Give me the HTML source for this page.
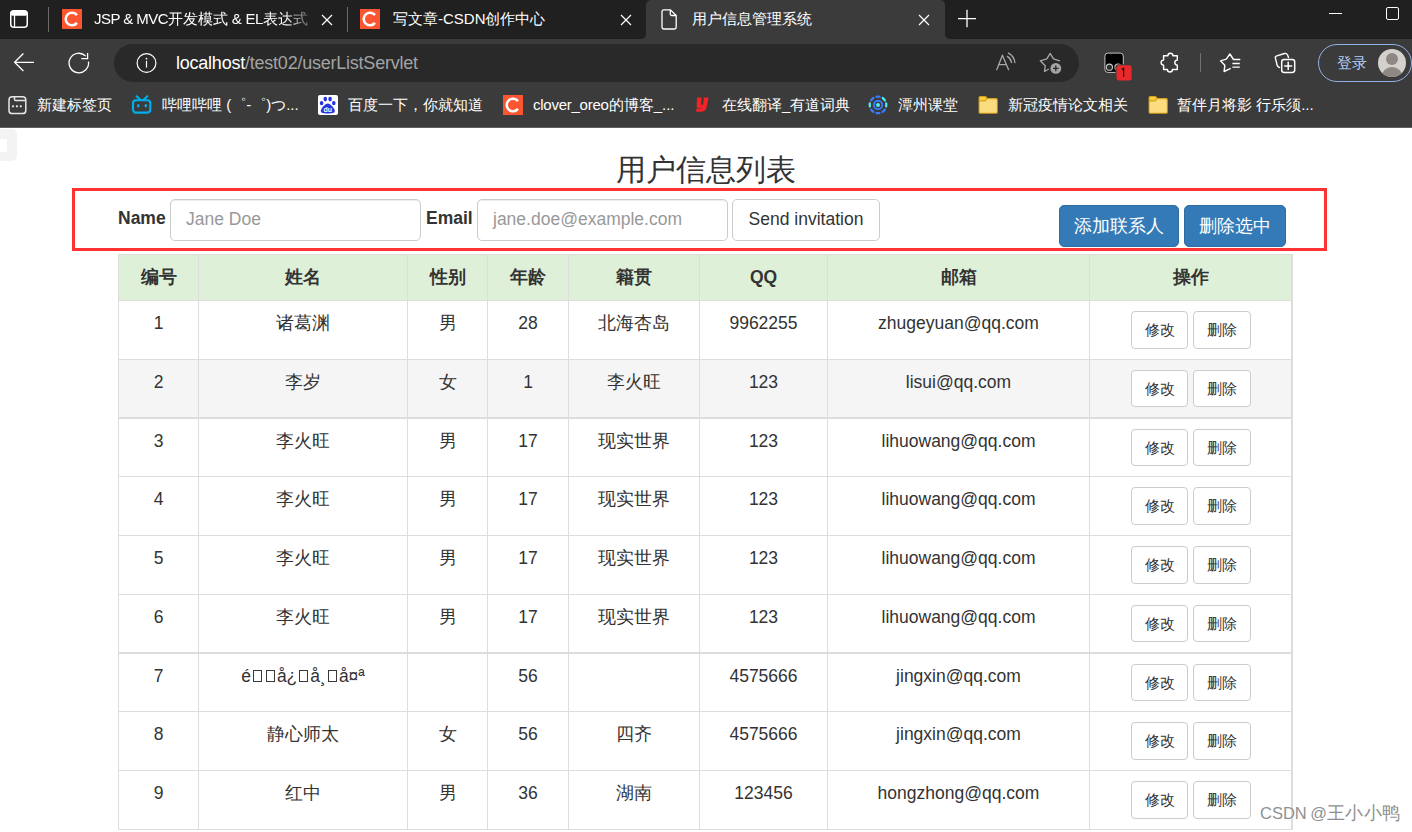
<!DOCTYPE html><html><head><meta charset="utf-8"><style>
*{margin:0;padding:0;box-sizing:border-box}
html,body{width:1412px;height:832px;overflow:hidden;background:#fff;font-family:"Liberation Sans",sans-serif}
.a{position:absolute}
svg{position:absolute;overflow:visible}
.tt{position:absolute;top:9px;font-size:15px;line-height:20px;color:#fff;white-space:nowrap}
.bm{position:absolute;top:95px;font-size:15px;line-height:20px;color:#fff;white-space:nowrap}
.lbl{position:absolute;font-size:17.5px;font-weight:bold;color:#333;line-height:22px;white-space:nowrap}
.inp{position:absolute;top:199px;height:42px;border:1px solid #ccc;border-radius:5px;background:#fff;box-shadow:inset 0 1px 1px rgba(0,0,0,.075);font-size:17.5px;color:#999;line-height:39px;padding-left:15px;white-space:nowrap}
.bp{position:absolute;top:205px;height:42px;background:#337ab7;border:1px solid #2e6da4;border-radius:5px;color:#fff;font-size:17.5px;line-height:40px;text-align:center;white-space:nowrap}
.hl{position:absolute;left:118px;width:1175px;height:1px;background:#ddd}
.vl{position:absolute;top:254px;width:1px;height:576px;background:#ddd}
.c{position:absolute;text-align:center;font-size:17.5px;line-height:22px;color:#333;white-space:nowrap}
.h{font-weight:bold}
.sb{position:absolute;height:37px;border:1px solid #ccc;border-radius:4px;background:#fff;font-size:15px;line-height:35px;text-align:center;color:#333}
.tofu{display:inline-block;width:9px;height:12px;border:1px solid #3a3a3a;vertical-align:0;margin:0 2px}
</style></head><body>
<div class="a" style="left:0;top:0;width:1412px;height:127px;background:#3b3b3b"></div>
<div class="a" style="left:0;top:0;width:646px;height:38.6px;background:#202020;border-bottom-right-radius:5px"></div>
<div class="a" style="left:945px;top:0;width:467px;height:38.6px;background:#202020;border-bottom-left-radius:5px"></div>
<div class="a" style="left:646px;top:0;width:6px;height:6px;background:#202020"></div><div class="a" style="left:646px;top:0;width:8px;height:8px;background:#3b3b3b;border-top-left-radius:5px"></div>
<div class="a" style="left:939px;top:0;width:6px;height:6px;background:#202020"></div><div class="a" style="left:937px;top:0;width:8px;height:8px;background:#3b3b3b;border-top-right-radius:5px"></div>
<div class="a" style="left:0;top:127px;width:1412px;height:1px;background:#5f5f5f"></div>
<svg style="left:0;top:0" width="40" height="40"><rect x="10.75" y="10.75" width="16.5" height="16.5" rx="3" fill="none" stroke="#fff" stroke-width="1.5"/><rect x="10.75" y="10.75" width="16.5" height="5" rx="2" fill="#fff"/><line x1="14.5" y1="15" x2="14.5" y2="27" stroke="#fff" stroke-width="1.3"/></svg>
<div class="a" style="left:48px;top:7px;width:1px;height:25px;background:#6b6b6b"></div>
<div class="a" style="left:347px;top:7px;width:1px;height:25px;background:#6b6b6b"></div>
<svg style="left:62px;top:9px" width="20" height="20"><rect width="20" height="20" fill="#fc5531"/><path d="M14.96 6.12A6.3 6.3 0 1 0 14.96 13.88" fill="none" stroke="#fff" stroke-width="2.5"/></svg>
<svg style="left:360px;top:9px" width="20" height="20"><rect width="20" height="20" fill="#fc5531"/><path d="M14.96 6.12A6.3 6.3 0 1 0 14.96 13.88" fill="none" stroke="#fff" stroke-width="2.5"/></svg>
<div class="tt" style="left:94px;width:216px;overflow:hidden;-webkit-mask-image:linear-gradient(90deg,#000 88%,rgba(0,0,0,.25))"><span style="letter-spacing:-0.55px">JSP &amp; MVC</span>开发模式<span style="letter-spacing:-0.3px"> &amp; EL</span>表达式</div>
<div class="tt" style="left:393px">写文章-CSDN创作中心</div>
<div class="tt" style="left:692px">用户信息管理系统</div>
<svg style="left:321px;top:14px" width="12" height="12"><path d="M1 1L11 11M11 1L1 11" stroke="#fff" stroke-width="1.2"/></svg>
<svg style="left:620px;top:14px" width="12" height="12"><path d="M1 1L11 11M11 1L1 11" stroke="#fff" stroke-width="1.2"/></svg>
<svg style="left:918px;top:14px" width="12" height="12"><path d="M1 1L11 11M11 1L1 11" stroke="#fff" stroke-width="1.2"/></svg>
<svg style="left:660px;top:9px" width="18" height="21"><path d="M2 2.5A1.8 1.8 0 0 1 3.8 0.8H10.5L16.2 6.5V18.2A1.8 1.8 0 0 1 14.4 20H3.8A1.8 1.8 0 0 1 2 18.2Z" fill="none" stroke="#fff" stroke-width="1.3"/><path d="M10.3 1V5A1.5 1.5 0 0 0 11.8 6.5H16" fill="none" stroke="#fff" stroke-width="1.3"/></svg>
<svg style="left:957px;top:9px" width="20" height="20"><path d="M10 0.7V18.3M1 9.6H19" stroke="#fff" stroke-width="1.3"/></svg>
<div class="a" style="left:1329px;top:13px;width:13px;height:1px;background:#fff"></div>
<div class="a" style="left:1386px;top:7px;width:13px;height:13px;border:1px solid #fff;border-radius:2px"></div>
<svg style="left:0;top:40px" width="100" height="40"><path d="M34 22.3H14.8M23.4 13.5L14.6 22.3L23.4 31" fill="none" stroke="#fff" stroke-width="1.3"/></svg>
<svg style="left:60px;top:44px" width="40" height="40"><g transform="translate(-60,-44)"><path d="M88.5 61.7A9.75 9.75 0 1 1 85.7 56.1" fill="none" stroke="#fff" stroke-width="1.3"/><path d="M81.3 58.6H87.6V53" fill="none" stroke="#fff" stroke-width="1.3"/></g></svg>
<div class="a" style="left:114px;top:44px;width:965px;height:38px;border-radius:19px;background:#292929"></div>
<svg style="left:136px;top:53px" width="21" height="21"><circle cx="10.5" cy="10" r="9.4" fill="none" stroke="#fff" stroke-width="1.2"/><rect x="9.9" y="7.7" width="1.2" height="6.9" fill="#fff"/><circle cx="10.5" cy="5.6" r="0.9" fill="#fff"/></svg>
<div class="a" style="left:176px;top:52px;font-size:18px;line-height:22px;letter-spacing:-0.23px;color:#fff;white-space:nowrap">localhost<span style="color:#a3a3a3">/test02/userListServlet</span></div>
<svg style="left:988px;top:46px" width="36" height="32"><path d="M8.8 23.7L14.4 9.2L20.6 23.7M11.2 18.7H18.1" fill="none" stroke="#a8a8a8" stroke-width="1.3" stroke-linecap="round" stroke-linejoin="round"/><path d="M19.4 10.4Q22.8 12.5 23.5 16.5M20.4 7.1Q26 10 26.9 16.5" fill="none" stroke="#a8a8a8" stroke-width="1.3" stroke-linecap="round"/></svg>
<svg style="left:1034px;top:48px" width="32" height="30"><path d="M25.5 12.8L19.5 10.8L16.2 5.4L12.8 10.8L6.3 12.8L11.2 17.7L10.5 23.5L14.4 21.3" fill="none" stroke="#a8a8a8" stroke-width="1.3" stroke-linecap="round" stroke-linejoin="round"/><circle cx="21.8" cy="20.4" r="5.4" fill="#a4a4a4"/><path d="M21.8 17.6V23.2M19 20.4H24.6" stroke="#292929" stroke-width="1.3"/></svg>
<svg style="left:1098px;top:46px" width="40" height="38"><rect x="6.9" y="7.1" width="18.4" height="19.3" rx="3" fill="#000" stroke="#c4c4c4" stroke-width="1"/><circle cx="11.4" cy="21.2" r="3.1" fill="#2c2c2c" stroke="#c8c8c8" stroke-width="1.1"/><circle cx="20" cy="21.2" r="3.1" fill="#2c2c2c" stroke="#c8c8c8" stroke-width="1.1"/><rect x="17.5" y="18.2" width="17.1" height="17.3" rx="3" fill="#3b3b3b"/><rect x="18.5" y="19.2" width="15.1" height="15.3" rx="2.5" fill="#e8282b"/><path d="M23.8 23.6L25.6 22.4V31" fill="none" stroke="#111" stroke-width="1.2"/></svg>
<svg style="left:1154px;top:48px" width="32" height="30"><path d="M9.6 7.8H13.9A2.5 2.5 0 0 1 18.9 7.8H23.3V12.1A2.5 2.5 0 0 0 23.3 17.1V21.5H18.4A2.5 2.5 0 0 1 13.4 21.5H9.6V17.1A2.5 2.5 0 0 1 9.6 12.1Z" fill="none" stroke="#fff" stroke-width="1.4" stroke-linejoin="round"/></svg>
<div class="a" style="left:1200px;top:53px;width:1px;height:19px;background:#707070"></div>
<svg style="left:1214px;top:48px" width="32" height="30"><path d="M25.8 11.5H19.5L15.9 6L12.3 11.2L6.5 12.8L10.8 17.3L10.1 23.5L16.2 20.6" fill="none" stroke="#fff" stroke-width="1.4" stroke-linecap="round" stroke-linejoin="round"/><path d="M18.4 15.5H25.8M18.4 19.1H25.8" stroke="#fff" stroke-width="1.4"/></svg>
<svg style="left:1269px;top:48px" width="32" height="30"><path d="M10.5 19.5Q8.6 19.2 8.1 17L6.4 10.2Q6 8.4 7.8 7.9L15.5 5.5Q17.6 5 18.6 7L19.5 9.6" fill="none" stroke="#fff" stroke-width="1.4" stroke-linecap="round"/><rect x="12.7" y="11.4" width="13" height="13" rx="2.4" fill="none" stroke="#fff" stroke-width="1.5"/><path d="M19.2 13.8V22M15.2 17.9H23.2" stroke="#fff" stroke-width="1.5"/></svg>
<div class="a" style="left:1318px;top:44px;width:94px;height:38px;border-radius:19px;border:1.8px solid #91b2e6"></div>
<div class="a" style="left:1337px;top:53px;font-size:15px;line-height:20px;color:#b4cff8;white-space:nowrap">登录</div>
<svg style="left:1378px;top:49px" width="28" height="28"><defs><clipPath id="av"><circle cx="14" cy="14" r="14"/></clipPath></defs><circle cx="14" cy="14" r="14" fill="#d4d1cd"/><g clip-path="url(#av)"><circle cx="14" cy="10.1" r="6" fill="#8d8884"/><ellipse cx="14" cy="28" rx="10.5" ry="10" fill="#8d8884"/></g></svg>
<svg style="left:7px;top:95px" width="22" height="22"><rect x="2" y="1.8" width="16.8" height="16.8" rx="3.2" fill="none" stroke="#e6e6e6" stroke-width="1.5"/><path d="M7.5 1.8V4.2Q7.5 5.5 8.8 5.5H18.8" fill="none" stroke="#e6e6e6" stroke-width="1.5"/><circle cx="6" cy="11.3" r="1.1" fill="#eee"/><circle cx="9.9" cy="11.3" r="1.1" fill="#eee"/><circle cx="13.8" cy="11.3" r="1.1" fill="#eee"/></svg>
<div class="bm" style="left:37px">新建标签页</div>
<svg style="left:131px;top:94px" width="22" height="22"><rect x="2" y="6.2" width="17.3" height="12.4" rx="3" fill="none" stroke="#00b0ec" stroke-width="2.1"/><path d="M5.6 2.2L9.2 5.6M16.4 2.2L12.8 5.6" stroke="#00b0ec" stroke-width="2" stroke-linecap="round"/><ellipse cx="7.3" cy="11.8" rx="1.2" ry="1.7" fill="#00b8f0"/><ellipse cx="14.8" cy="11.8" rx="1.2" ry="1.7" fill="#00b8f0"/></svg>
<div class="bm" style="left:162px">哔哩哔哩 (゜-゜)つ...</div>
<svg style="left:318px;top:95px" width="20" height="20"><rect width="20" height="20" rx="2" fill="#fff"/><g fill="#2932e1"><ellipse cx="7.3" cy="4.1" rx="1.8" ry="2.4"/><ellipse cx="12.1" cy="4.1" rx="1.8" ry="2.4"/><ellipse cx="3.6" cy="8.1" rx="1.8" ry="2.2"/><ellipse cx="15.8" cy="8.1" rx="1.8" ry="2.2"/><path d="M9.8 8.4C7.3 8.4 2.8 13.5 2.8 15.8C2.8 18.2 5.5 18.5 9.8 18.5C14.1 18.5 16.8 18.2 16.8 15.8C16.8 13.5 12.3 8.4 9.8 8.4Z"/></g><text x="9.8" y="16.6" font-family="Liberation Sans" font-size="7" font-weight="bold" fill="#fff" text-anchor="middle">du</text></svg>
<div class="bm" style="left:348px">百度一下，你就知道</div>
<svg style="left:503px;top:95px" width="20" height="20"><rect width="20" height="20" fill="#fc5531"/><path d="M14.96 6.12A6.3 6.3 0 1 0 14.96 13.88" fill="none" stroke="#fff" stroke-width="2.5"/></svg>
<div class="bm" style="left:533px"><span style="letter-spacing:-0.25px">clover_oreo</span>的博客_...</div>
<svg style="left:688px;top:88px" width="32" height="32"><path d="M9 9.6H13.6L13 15.8Q12.9 16.8 13.9 16.8H16.2L16.4 20.1H11.3Q8.6 20.1 8.7 17.4Z" fill="#f52226"/><path d="M15.9 9.6H20.5L18.6 19.3Q17.6 23.8 12.6 23.8H8L8.6 20.5H12.7Q14.6 20.5 15 18.4Z" fill="#f52226"/></svg>
<div class="bm" style="left:722px">在线翻译_有道词典</div>
<svg style="left:862px;top:88px" width="32" height="32"><path d="M24.15 15.32A8.3 8.3 0 0 1 24.15 18.48" fill="none" stroke="#4ff0f0" stroke-width="2.2" stroke-linecap="round"/><path d="M22.88 21.54A8.3 8.3 0 0 1 20.64 23.78" fill="none" stroke="#3a7bff" stroke-width="2.2" stroke-linecap="round"/><path d="M17.58 25.05A8.3 8.3 0 0 1 14.42 25.05" fill="none" stroke="#3a7bff" stroke-width="2.2" stroke-linecap="round"/><path d="M11.36 23.78A8.3 8.3 0 0 1 9.12 21.54" fill="none" stroke="#3a7bff" stroke-width="2.2" stroke-linecap="round"/><path d="M7.85 18.48A8.3 8.3 0 0 1 7.85 15.32" fill="none" stroke="#4ff0f0" stroke-width="2.2" stroke-linecap="round"/><path d="M9.12 12.26A8.3 8.3 0 0 1 11.36 10.02" fill="none" stroke="#3a7bff" stroke-width="2.2" stroke-linecap="round"/><path d="M14.42 8.75A8.3 8.3 0 0 1 17.58 8.75" fill="none" stroke="#3a7bff" stroke-width="2.2" stroke-linecap="round"/><path d="M20.64 10.02A8.3 8.3 0 0 1 22.88 12.26" fill="none" stroke="#4ff0f0" stroke-width="2.2" stroke-linecap="round"/><circle cx="16" cy="16.9" r="4.2" fill="none" stroke="#3a7bff" stroke-width="1.9"/><circle cx="16" cy="16.9" r="2" fill="#4ff0f0"/></svg>
<div class="bm" style="left:898px">潭州课堂</div>
<svg style="left:970px;top:90px" width="32" height="30"><path d="M8.6 7.6Q8.6 6 10.2 6H15.2Q16 6 16.6 6.8L17.6 8.1H26.2Q27.8 8.1 27.8 9.7V22.2Q27.8 23.8 26.2 23.8H10.2Q8.6 23.8 8.6 22.2Z" fill="#d9a21e"/><path d="M9.6 8Q9.6 7 10.6 7H15L16.2 8.6L15.2 10.3H9.6Z" fill="#f5cc3c"/><path d="M9.6 11.6H15.4L17.2 9.2H25.8Q26.8 9.2 26.8 10.2V21.8Q26.8 22.8 25.8 22.8H10.6Q9.6 22.8 9.6 21.8Z" fill="#fbdd80"/></svg>
<div class="bm" style="left:1008px">新冠疫情论文相关</div>
<svg style="left:1140px;top:90px" width="32" height="30"><path d="M8.6 7.6Q8.6 6 10.2 6H15.2Q16 6 16.6 6.8L17.6 8.1H26.2Q27.8 8.1 27.8 9.7V22.2Q27.8 23.8 26.2 23.8H10.2Q8.6 23.8 8.6 22.2Z" fill="#d9a21e"/><path d="M9.6 8Q9.6 7 10.6 7H15L16.2 8.6L15.2 10.3H9.6Z" fill="#f5cc3c"/><path d="M9.6 11.6H15.4L17.2 9.2H25.8Q26.8 9.2 26.8 10.2V21.8Q26.8 22.8 25.8 22.8H10.6Q9.6 22.8 9.6 21.8Z" fill="#fbdd80"/></svg>
<div class="bm" style="left:1177px">暂伴月将影 行乐须...</div>
<div class="a" style="left:-6px;top:129px;width:23px;height:32px;border-radius:5px;background:#f3f3f3"></div>
<div class="a" style="left:0;top:139px;width:7px;height:13px;background:#fff"></div>
<div class="a" style="left:0;top:150px;width:1412px;text-align:center;font-size:30px;line-height:40px;color:#333;padding-left:0">用户信息列表</div>
<div class="a" style="left:72px;top:188px;width:1255px;height:63px;border:3px solid #fe3232"></div>
<div class="lbl" style="left:118px;top:207px">Name</div>
<div class="inp" style="left:170px;width:251px">Jane Doe</div>
<div class="lbl" style="left:426px;top:207px">Email</div>
<div class="inp" style="left:477px;width:251px">jane.doe@example.com</div>
<div class="a" style="left:732px;top:199px;width:148px;height:42px;border:1px solid #ccc;border-radius:5px;font-size:17.5px;line-height:39px;text-align:center;color:#333;white-space:nowrap">Send invitation</div>
<div class="bp" style="left:1059px;width:120px">添加联系人</div>
<div class="bp" style="left:1184px;width:102px">删除选中</div>
<div class="a" style="left:118px;top:254px;width:1174px;height:46px;background:#dff0d8"></div>
<div class="a" style="left:118px;top:359px;width:1174px;height:58px;background:#f5f5f5"></div>
<div class="hl" style="top:254px;height:1px"></div>
<div class="hl" style="top:300px;height:1px"></div>
<div class="hl" style="top:359px;height:1px"></div>
<div class="hl" style="top:417px;height:2px"></div>
<div class="hl" style="top:476px;height:1px"></div>
<div class="hl" style="top:535px;height:1px"></div>
<div class="hl" style="top:594px;height:1px"></div>
<div class="hl" style="top:652px;height:2px"></div>
<div class="hl" style="top:711px;height:1px"></div>
<div class="hl" style="top:770px;height:1px"></div>
<div class="hl" style="top:829px;height:1px"></div>
<div class="vl" style="left:118px"></div>
<div class="vl" style="left:198px"></div>
<div class="vl" style="left:407px"></div>
<div class="vl" style="left:487px"></div>
<div class="vl" style="left:568px"></div>
<div class="vl" style="left:699px"></div>
<div class="vl" style="left:827px"></div>
<div class="vl" style="left:1089px"></div>
<div class="vl" style="left:1291px;width:2px"></div>
<div class="c h" style="left:119px;width:79px;top:266px">编号</div>
<div class="c h" style="left:199px;width:208px;top:266px">姓名</div>
<div class="c h" style="left:408px;width:79px;top:266px">性别</div>
<div class="c h" style="left:488px;width:80px;top:266px">年龄</div>
<div class="c h" style="left:569px;width:130px;top:266px">籍贯</div>
<div class="c h" style="left:700px;width:127px;top:266px">QQ</div>
<div class="c h" style="left:828px;width:261px;top:266px">邮箱</div>
<div class="c h" style="left:1090px;width:202px;top:266px">操作</div>
<div class="c" style="left:119px;width:79px;top:312px">1</div>
<div class="c" style="left:199px;width:208px;top:312px">诸葛渊</div>
<div class="c" style="left:408px;width:79px;top:312px">男</div>
<div class="c" style="left:488px;width:80px;top:312px">28</div>
<div class="c" style="left:569px;width:130px;top:312px">北海杏岛</div>
<div class="c" style="left:700px;width:127px;top:312px">9962255</div>
<div class="c" style="left:828px;width:261px;top:312px">zhugeyuan@qq.com</div>
<div class="sb" style="left:1131px;top:311px;width:57px;height:38px">修改</div>
<div class="sb" style="left:1193px;top:311px;width:58px;height:38px">删除</div>
<div class="c" style="left:119px;width:79px;top:371px">2</div>
<div class="c" style="left:199px;width:208px;top:371px">李岁</div>
<div class="c" style="left:408px;width:79px;top:371px">女</div>
<div class="c" style="left:488px;width:80px;top:371px">1</div>
<div class="c" style="left:569px;width:130px;top:371px">李火旺</div>
<div class="c" style="left:700px;width:127px;top:371px">123</div>
<div class="c" style="left:828px;width:261px;top:371px">lisui@qq.com</div>
<div class="sb" style="left:1131px;top:370px;width:57px;height:37px">修改</div>
<div class="sb" style="left:1193px;top:370px;width:58px;height:37px">删除</div>
<div class="c" style="left:119px;width:79px;top:430px">3</div>
<div class="c" style="left:199px;width:208px;top:430px">李火旺</div>
<div class="c" style="left:408px;width:79px;top:430px">男</div>
<div class="c" style="left:488px;width:80px;top:430px">17</div>
<div class="c" style="left:569px;width:130px;top:430px">现实世界</div>
<div class="c" style="left:700px;width:127px;top:430px">123</div>
<div class="c" style="left:828px;width:261px;top:430px">lihuowang@qq.com</div>
<div class="sb" style="left:1131px;top:429px;width:57px;height:37px">修改</div>
<div class="sb" style="left:1193px;top:429px;width:58px;height:37px">删除</div>
<div class="c" style="left:119px;width:79px;top:488px">4</div>
<div class="c" style="left:199px;width:208px;top:488px">李火旺</div>
<div class="c" style="left:408px;width:79px;top:488px">男</div>
<div class="c" style="left:488px;width:80px;top:488px">17</div>
<div class="c" style="left:569px;width:130px;top:488px">现实世界</div>
<div class="c" style="left:700px;width:127px;top:488px">123</div>
<div class="c" style="left:828px;width:261px;top:488px">lihuowang@qq.com</div>
<div class="sb" style="left:1131px;top:487px;width:57px;height:38px">修改</div>
<div class="sb" style="left:1193px;top:487px;width:58px;height:38px">删除</div>
<div class="c" style="left:119px;width:79px;top:547px">5</div>
<div class="c" style="left:199px;width:208px;top:547px">李火旺</div>
<div class="c" style="left:408px;width:79px;top:547px">男</div>
<div class="c" style="left:488px;width:80px;top:547px">17</div>
<div class="c" style="left:569px;width:130px;top:547px">现实世界</div>
<div class="c" style="left:700px;width:127px;top:547px">123</div>
<div class="c" style="left:828px;width:261px;top:547px">lihuowang@qq.com</div>
<div class="sb" style="left:1131px;top:546px;width:57px;height:38px">修改</div>
<div class="sb" style="left:1193px;top:546px;width:58px;height:38px">删除</div>
<div class="c" style="left:119px;width:79px;top:606px">6</div>
<div class="c" style="left:199px;width:208px;top:606px">李火旺</div>
<div class="c" style="left:408px;width:79px;top:606px">男</div>
<div class="c" style="left:488px;width:80px;top:606px">17</div>
<div class="c" style="left:569px;width:130px;top:606px">现实世界</div>
<div class="c" style="left:700px;width:127px;top:606px">123</div>
<div class="c" style="left:828px;width:261px;top:606px">lihuowang@qq.com</div>
<div class="sb" style="left:1131px;top:605px;width:57px;height:37px">修改</div>
<div class="sb" style="left:1193px;top:605px;width:58px;height:37px">删除</div>
<div class="c" style="left:119px;width:79px;top:665px">7</div>
<div class="c" style="left:199px;width:208px;top:665px">é<span class="tofu"></span><span class="tofu"></span>å¿<span class="tofu"></span>å¸<span class="tofu"></span>å¤ª</div>
<div class="c" style="left:408px;width:79px;top:665px"></div>
<div class="c" style="left:488px;width:80px;top:665px">56</div>
<div class="c" style="left:569px;width:130px;top:665px"></div>
<div class="c" style="left:700px;width:127px;top:665px">4575666</div>
<div class="c" style="left:828px;width:261px;top:665px">jingxin@qq.com</div>
<div class="sb" style="left:1131px;top:664px;width:57px;height:37px">修改</div>
<div class="sb" style="left:1193px;top:664px;width:58px;height:37px">删除</div>
<div class="c" style="left:119px;width:79px;top:723px">8</div>
<div class="c" style="left:199px;width:208px;top:723px">静心师太</div>
<div class="c" style="left:408px;width:79px;top:723px">女</div>
<div class="c" style="left:488px;width:80px;top:723px">56</div>
<div class="c" style="left:569px;width:130px;top:723px">四齐</div>
<div class="c" style="left:700px;width:127px;top:723px">4575666</div>
<div class="c" style="left:828px;width:261px;top:723px">jingxin@qq.com</div>
<div class="sb" style="left:1131px;top:722px;width:57px;height:38px">修改</div>
<div class="sb" style="left:1193px;top:722px;width:58px;height:38px">删除</div>
<div class="c" style="left:119px;width:79px;top:782px">9</div>
<div class="c" style="left:199px;width:208px;top:782px">红中</div>
<div class="c" style="left:408px;width:79px;top:782px">男</div>
<div class="c" style="left:488px;width:80px;top:782px">36</div>
<div class="c" style="left:569px;width:130px;top:782px">湖南</div>
<div class="c" style="left:700px;width:127px;top:782px">123456</div>
<div class="c" style="left:828px;width:261px;top:782px">hongzhong@qq.com</div>
<div class="sb" style="left:1131px;top:781px;width:57px;height:38px">修改</div>
<div class="sb" style="left:1193px;top:781px;width:58px;height:38px">删除</div>
<div class="a" style="left:1260px;top:802px;font-size:16.5px;line-height:22px;color:#909090;white-space:nowrap;text-shadow:0 0 1px #fff">CSDN<span style="margin-left:-1px"> @</span><span style="font-size:18px;letter-spacing:0.3px">王小小鸭</span></div>
</body></html>
